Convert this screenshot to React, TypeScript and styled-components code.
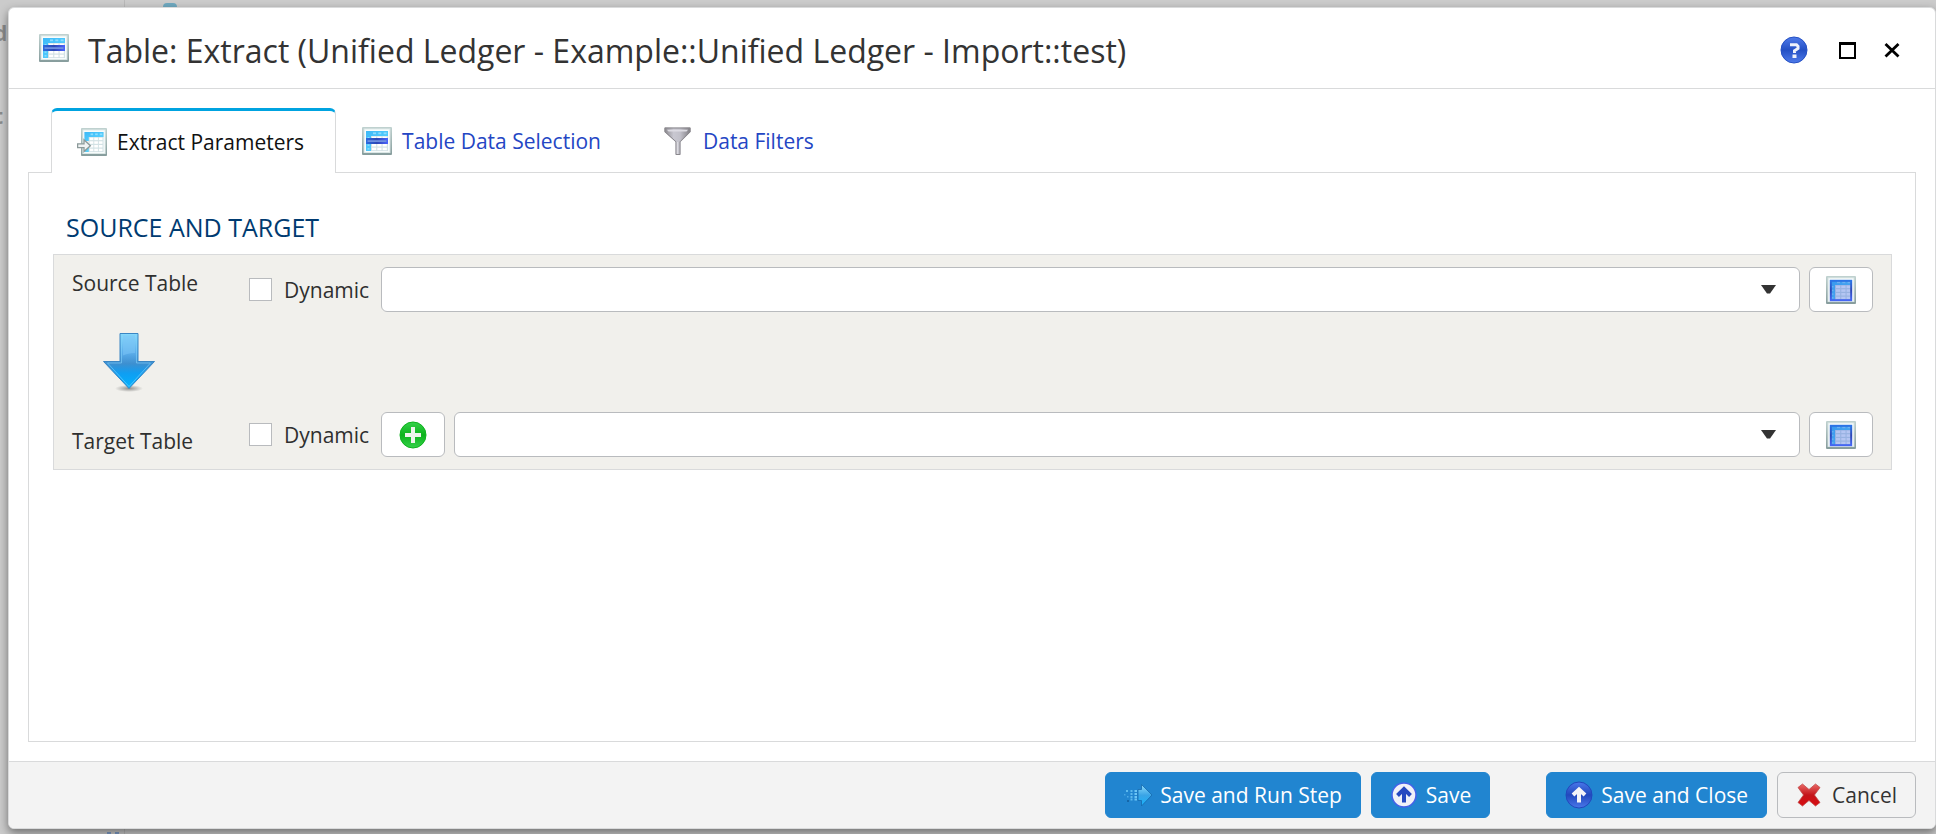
import React from "react";
import styled, { createGlobalStyle, css } from "styled-components";

const GlobalStyle = createGlobalStyle`
  * { box-sizing: border-box; }
  body {
    margin: 0;
    background: #cbcbcb;
    color: #2f2f2f;
    font-family: "Open Sans", "Noto Sans", sans-serif;
    font-size: 21px;
    line-height: 30px;
  }
  button, select, input { font: inherit; color: inherit; margin: 0; }
  svg { display: block; flex: none; }
`;

/* ---------- page behind the dialog ---------- */

const Page = styled.div`
  position: relative;
  overflow: hidden;
  min-height: 100vh;
  padding: 7px 0 5px 8px;
  display: flex;
`;

const Backdrop = styled.div`
  position: absolute;
  inset: 0;
  color: #8b8b8b;
  font-weight: 700;
`;

const BackdropText = styled.span<{ $top: number; $left: number }>`
  position: absolute;
  top: ${(p) => p.$top}px;
  left: ${(p) => p.$left}px;
`;

const BackdropRule = styled.div`
  position: absolute;
  top: 0;
  bottom: 0;
  left: 124px;
  width: 1px;
  background: #b9b9b9;
`;

const BackdropBadge = styled.div`
  position: absolute;
  top: 3px;
  left: 163px;
  width: 14px;
  height: 8px;
  border-radius: 4px;
  background: #6fa9c0;
`;

const BackdropMark = styled.div<{ $left: number }>`
  position: absolute;
  bottom: 0;
  left: ${(p) => p.$left}px;
  width: 4px;
  height: 2px;
  background: #7f9cc6;
`;

/* ---------- dialog ---------- */

const Dialog = styled.section`
  position: relative;
  flex: 1;
  min-width: 0;
  display: flex;
  flex-direction: column;
  background: #fff;
  border: 1px solid #d9dadb;
  border-radius: 6px;
  box-shadow: 0 4px 10px rgba(0, 0, 0, 0.45);
`;

const Header = styled.header`
  display: flex;
  align-items: center;
  height: 81px;
  padding: 0 29px 0 30px;
  border-bottom: 1px solid #d9dadb;
`;

const Title = styled.h1`
  flex: 1;
  margin: 0;
  padding: 6px 0 0 19px;
  font-size: 32px;
  line-height: 44px;
  font-weight: 400;
  white-space: nowrap;
  color: #333;
`;

const WindowActions = styled.div`
  display: flex;
  gap: 16px;
  padding-top: 4px;
`;

const IconButton = styled.button<{ $spaced?: boolean }>`
  display: flex;
  align-items: center;
  justify-content: center;
  width: 28px;
  height: 28px;
  padding: 0;
  border: 0;
  background: none;
  ${(p) => p.$spaced && css`margin-right: 10px;`}
`;

const Body = styled.main`
  flex: 1;
  display: flex;
  flex-direction: column;
  padding: 19px;
`;

const TabList = styled.div`
  display: flex;
  padding-left: 23px;
`;

const Tab = styled.button<{ $active?: boolean }>`
  display: flex;
  align-items: center;
  gap: 10px;
  height: 65px;
  margin-bottom: -1px;
  padding: 0 35px 0 25px;
  border: 1px solid transparent;
  background: none;
  color: #2446c4;
  white-space: nowrap;
  ${(p) =>
    p.$active &&
    css`
      position: relative;
      padding: 0 31px 0 25px;
      border-color: #d9dadb;
      border-top: 3px solid #00a3e0;
      border-bottom: 0;
      border-radius: 6px 6px 0 0;
      background: #fff;
      color: #111;
    `}
`;

const Panel = styled.div`
  flex: 1;
  padding: 37px 23px 24px 24px;
  border: 1px solid #d9dadb;
`;

const SectionTitle = styled.h2`
  margin: 0 0 10px;
  padding-left: 13px;
  font-size: 25px;
  line-height: 34px;
  font-weight: 400;
  color: #003b71;
`;

const FieldBox = styled.div`
  padding: 12px 18px;
  border: 1px solid #d9dadb;
  background: #f1f0ec;
`;

const FieldRow = styled.div`
  display: flex;
  gap: 9px;
  height: 45px;
`;

const FieldLabel = styled.label<{ $align: "start" | "end" }>`
  align-self: flex-${(p) => p.$align};
  width: 168px;
  line-height: 32px;
`;

const CheckLabel = styled.label`
  display: flex;
  align-items: center;
  gap: 12px;
  margin-right: 3px;
`;

const Checkbox = styled.input`
  appearance: none;
  width: 23px;
  height: 23px;
  border: 1px solid #b9bbbe;
  background: #fff;
`;

const SelectWrap = styled.div`
  flex: 1;
  display: grid;
  align-items: center;
  & > * { grid-area: 1 / 1; }
  & > svg {
    justify-self: end;
    margin-right: 24px;
    pointer-events: none;
  }
`;

const Select = styled.select`
  appearance: none;
  width: 100%;
  height: 45px;
  padding: 0 48px 0 12px;
  border: 1px solid #b9bbbe;
  border-radius: 6px;
  background: #fff;
`;

const SquareButton = styled.button`
  display: flex;
  align-items: center;
  justify-content: center;
  width: 64px;
  height: 45px;
  padding: 0;
  border: 1px solid #b9bbbe;
  border-radius: 6px;
  background: #fff;
`;

const ArrowRow = styled.div`
  display: flex;
  align-items: center;
  height: 100px;
  padding-left: 30px;
`;

const Footer = styled.footer`
  display: flex;
  justify-content: flex-end;
  gap: 10px;
  padding: 10px 19px;
  border-top: 1px solid #d9dadb;
  border-radius: 0 0 5px 5px;
  background: #f3f3f3;
`;

const FooterGroup = styled.div`
  display: flex;
  gap: 10px;
  margin-right: 46px;
`;

const ActionButton = styled.button<{ $primary?: boolean }>`
  display: flex;
  align-items: center;
  gap: 8px;
  height: 46px;
  padding: 0 18px;
  border: 1px solid ${(p) => (p.$primary ? "#2185d0" : "#b9bbbe")};
  border-radius: 6px;
  background: ${(p) => (p.$primary ? "#2185d0" : "transparent")};
  color: ${(p) => (p.$primary ? "#fff" : "#333")};
  white-space: nowrap;
`;

/* ---------- icons ---------- */

const TableIcon = ({ mode, id }: { mode: "row" | "all" | "import"; id: string }) => (
  <svg width="30" height="28" viewBox="0 0 30 28" aria-hidden="true">
    <defs>
      <linearGradient id={`${id}-frame`} x1="0" y1="0" x2="0" y2="1">
        <stop offset="0" stopColor="#c0d2d0" />
        <stop offset="1" stopColor="#869c9c" />
      </linearGradient>
      <linearGradient id={`${id}-head`} x1="0" y1="0" x2="1" y2="1">
        <stop offset="0" stopColor="#3db9f8" />
        <stop offset="1" stopColor="#5fd6ff" />
      </linearGradient>
      <linearGradient id={`${id}-sel`} x1="0" y1="0" x2="1" y2="0">
        <stop offset="0" stopColor="#2a6be0" />
        <stop offset="0.5" stopColor="#2d47b4" />
        <stop offset="1" stopColor="#4a63ff" />
      </linearGradient>
      <linearGradient id={`${id}-edge`} x1="0" y1="0" x2="0" y2="1">
        <stop offset="0" stopColor="#2b74e6" />
        <stop offset="0.5" stopColor="#2c46b6" />
        <stop offset="1" stopColor="#4466f4" />
      </linearGradient>
    </defs>
    <g transform={mode === "import" ? "translate(4 0) scale(.867 1)" : undefined}>
      <rect width="30" height="28" rx="1" fill={`url(#${id}-frame)`} />
      <rect x="1.6" y="1.4" width="26.8" height="24.6" fill="#dbe7e6" />
      <rect x="2.6" y="2.4" width="24.8" height="22.6" fill="#f8fcfc" />
      <rect x="4" y="4" width="22" height="20" fill="#d3e2e5" />
      <path d="M4 4h22v5H9v15H4z" fill={mode === "import" ? "#e9f1f1" : `url(#${id}-head)`} />
      {mode === "import" && <path d="M4 4h22v5H9v4H4z" fill={`url(#${id}-head)`} />}
      {mode === "import" && <path d="M4 21l5-3v6H4z" fill="#5acdf5" />}
      <g fill="#fff">
        {[0, 1, 2, 3].map((r) =>
          [0, 1, 2].map((c) => (
            <rect key={`${r}-${c}`} x={10 + c * 5.3} y={9.6 + r * 3.7} width="4.2" height="2.5" />
          )),
        )}
      </g>
      <g fill="#a9e8ff" opacity=".7">
        {[0, 1, 2].map((c) => (
          <rect key={c} x={11 + c * 5.3} y="5.4" width="3" height="1.8" />
        ))}
        {mode !== "import" &&
          [0, 1, 2, 3].map((r) => <rect key={r} x="5.5" y={10 + r * 3.7} width="2" height="1.5" />)}
      </g>
      {mode === "row" && (
        <g>
          <rect x="4" y="11" width="22" height="6" fill={`url(#${id}-sel)`} />
          <rect x="5.5" y="13.2" width="19" height="1.8" fill="#6f8fe0" />
        </g>
      )}
      {mode === "all" && (
        <g>
          <rect x="4" y="4" width="22" height="20" fill="#2f5fda" opacity=".36" />
          <rect
            x="4.8"
            y="4.8"
            width="20.4"
            height="19.4"
            fill="none"
            stroke={`url(#${id}-edge)`}
            strokeWidth="2"
          />
        </g>
      )}
    </g>
    {mode === "import" && (
      <path
        d="M.6 15.800h6.400v-4l6.400 5.900-6.400 5.900v-4H.6z"
        fill="#f0f3f3"
        stroke="#8b9999"
        strokeWidth="1.3"
      />
    )}
  </svg>
);

const FunnelIcon = () => (
  <svg width="30" height="30" viewBox="0 0 30 30" aria-hidden="true">
    <defs>
      <linearGradient id="funnel" x1="0" y1="0" x2="1" y2="0">
        <stop offset="0" stopColor="#89878c" />
        <stop offset=".35" stopColor="#c9c8d1" />
        <stop offset=".6" stopColor="#c2c1ca" />
        <stop offset="1" stopColor="#7e7c81" />
      </linearGradient>
    </defs>
    <path d="M1.500 1.500h26V6L17.500 16v13h-5V16L1.500 6z" fill="url(#funnel)" />
    <path
      d="M2 2h25v3.800L17 15.800V28.500h-4V15.800L2 5.800z"
      fill="none"
      stroke="#8a888d"
      strokeWidth="1"
    />
    <path d="M4 3.800h21l-1.500 1.700H5.500z" fill="#dddce3" />
    <path d="M13.800 16h1.400v12h-1.400z" fill="#dcdbe0" />
  </svg>
);

const Sphere = ({ id, top, bottom }: { id: string; top: string; bottom: string }) => (
  <>
    <defs>
      <linearGradient id={id} x1="0" y1="0" x2="0" y2="1">
        <stop offset="0" stopColor={top} />
        <stop offset=".5" stopColor={bottom} />
        <stop offset="1" stopColor={top} />
      </linearGradient>
    </defs>
    <circle cx="14" cy="14" r="13" fill={`url(#${id})`} stroke={bottom} strokeWidth="1" />
  </>
);

const HelpIcon = () => (
  <svg width="28" height="28" viewBox="0 0 28 28" aria-hidden="true">
    <Sphere id="help" top="#4f7bea" bottom="#2450c4" />
    <path
      d="M10 8.800h6.500l1.500 1.500v2.200l-3.500 2.300v2.200"
      fill="none"
      stroke="#eef2fb"
      strokeWidth="3"
    />
    <rect x="12.500" y="18.500" width="4" height="3.500" fill="#eef2fb" />
  </svg>
);

const MaximizeIcon = () => (
  <svg width="18" height="18" viewBox="0 0 18 18" aria-hidden="true">
    <rect x="0" y="1" width="17" height="17" fill="#000" />
    <rect x="2" y="4" width="13" height="12" fill="#fff" />
  </svg>
);

const CloseIcon = () => (
  <svg width="16" height="16" viewBox="0 0 16 16" aria-hidden="true">
    <path d="M1.500 2l13 12.500M14.500 2l-13 12.500" stroke="#000" strokeWidth="2.800" />
  </svg>
);

const CaretIcon = () => (
  <svg width="15" height="9" viewBox="0 0 15 9" aria-hidden="true">
    <path d="M0 0h15L9 8.500H6z" fill="#333" />
  </svg>
);

const DownArrowIcon = () => (
  <svg width="54" height="60" viewBox="0 0 54 60" aria-hidden="true">
    <defs>
      <linearGradient id="down" x1="0" y1="0" x2="0" y2="1">
        <stop offset="0" stopColor="#8adcfc" />
        <stop offset=".35" stopColor="#5badea" />
        <stop offset=".55" stopColor="#3d8fd0" />
        <stop offset=".72" stopColor="#0f9ef2" />
        <stop offset="1" stopColor="#00b4ff" />
      </linearGradient>
      <radialGradient id="down-shadow">
        <stop offset="0" stopColor="#000" stopOpacity=".4" />
        <stop offset="1" stopColor="#000" stopOpacity="0" />
      </radialGradient>
    </defs>
    <ellipse cx="27" cy="56.500" rx="14" ry="3.500" fill="url(#down-shadow)" />
    <path d="M18 1.500h18V29.500h16.500L27 56.500 1.500 29.500H18z" fill="url(#down)" stroke="#3a86c4" />
    <path d="M19.500 3h15v28h14L27 54.500 5.500 31h14z" fill="none" stroke="#7fd0fa" strokeOpacity=".6" />
    <path d="M21 3.500h12V21c-5 0-9 1-12 2.500z" fill="#7cc4f5" fillOpacity=".55" />
  </svg>
);

const AddIcon = () => (
  <svg width="28" height="28" viewBox="0 0 28 28" aria-hidden="true">
    <Sphere id="add" top="#35d14a" bottom="#0cb31c" />
    <path d="M14 6v16M6 14h16" stroke="#eef4ec" strokeWidth="4" />
  </svg>
);

const RunIcon = () => (
  <svg width="28" height="28" viewBox="0 0 28 28" aria-hidden="true">
    <defs>
      <linearGradient id="run" x1="0" y1="0" x2="0" y2="1">
        <stop offset="0" stopColor="#8fdcfb" />
        <stop offset=".5" stopColor="#3aa4e6" />
        <stop offset="1" stopColor="#16b2fb" />
      </linearGradient>
    </defs>
    <path d="M14 8.500h3.500V3.500L28 14 17.500 25v-5.500H14z" fill="url(#run)" stroke="#1769ad" strokeWidth=".8" />
    <g fill="#6cc5f5">
      {[9.5, 12.500, 15.500, 18].map((y) => (
        <rect key={y} x="10.500" y={y - 0.5} width="2.500" height="2" />
      ))}
      {[9.5, 12.500, 15.500, 18].map((y) => (
        <rect key={y} x="6.500" y={y - 0.5} width="2" height="2" opacity=".8" />
      ))}
      <rect x="2" y="9" width="2" height="2" opacity=".8" />
      <rect x="3" y="15" width="1.500" height="1.500" opacity=".6" />
      <rect x="0" y="13" width="1.500" height="1.500" opacity=".5" />
      <rect x="3" y="19" width="2" height="2" fill="#1566a8" />
    </g>
  </svg>
);

const SaveIcon = () => (
  <svg width="28" height="28" viewBox="0 0 28 28" aria-hidden="true">
    <circle cx="14" cy="14" r="12" fill="#f0f1f8" stroke="#4461e8" strokeWidth="1.500" />
    <path d="M14 8v13.500M7.500 14.500L14 8l6.500 6.500" fill="none" stroke="#2548c0" strokeWidth="4" />
  </svg>
);

const SaveCloseIcon = () => (
  <svg width="28" height="28" viewBox="0 0 28 28" aria-hidden="true">
    <Sphere id="save-close" top="#4a78ea" bottom="#2148bd" />
    <path
      d="M14 8.500v13M8 14l6-5.500 6 5.500"
      fill="none"
      stroke="#f3f4f8"
      strokeWidth="4"
    />
  </svg>
);

const CancelIcon = () => (
  <svg width="28" height="28" viewBox="0 0 28 28" aria-hidden="true">
    <defs>
      <linearGradient id="cancel" x1="0" y1="0" x2="0" y2="1">
        <stop offset="0" stopColor="#ea6a66" />
        <stop offset=".5" stopColor="#c4141a" />
        <stop offset="1" stopColor="#d80c10" />
      </linearGradient>
    </defs>
    <path
      d="M2 6.500L6.500 3l6.500 5.500L19.500 3 24 6.500 18.500 14l5.500 7.500-4.500 3.500-6.500-5.500L6.500 25 2 21.500 7.500 14z"
      fill="url(#cancel)"
      stroke="#c04a4a"
      strokeWidth=".8"
      strokeLinejoin="round"
    />
  </svg>
);

/* ---------- fields ---------- */

const TableField = ({
  name,
  label,
  align,
  canAdd,
}: {
  name: string;
  label: string;
  align: "start" | "end";
  canAdd?: boolean;
}) => (
  <FieldRow>
    <FieldLabel htmlFor={name} $align={align}>
      {label}
    </FieldLabel>
    <CheckLabel>
      <Checkbox type="checkbox" name={`${name}-dynamic`} />
      Dynamic
    </CheckLabel>
    {canAdd && (
      <SquareButton type="button" aria-label="Add table">
        <AddIcon />
      </SquareButton>
    )}
    <SelectWrap>
      <Select id={name} defaultValue="">
        <option value="" />
      </Select>
      <CaretIcon />
    </SelectWrap>
    <SquareButton type="button" aria-label={`Browse ${label}`}>
      <TableIcon mode="all" id={`${name}-browse`} />
    </SquareButton>
  </FieldRow>
);

export default function App() {
  return (
    <Page>
      <GlobalStyle />
      <Backdrop aria-hidden="true">
        <BackdropText $top={18} $left={-6}>d</BackdropText>
        <BackdropText $top={101} $left={-6}>t</BackdropText>
        <BackdropRule />
        <BackdropBadge />
        <BackdropMark $left={107} />
        <BackdropMark $left={115} />
      </Backdrop>
      <Dialog role="dialog" aria-labelledby="dialog-title">
        <Header>
          <TableIcon mode="row" id="title" />
          <Title id="dialog-title">
            Table: Extract (Unified Ledger - Example::Unified Ledger - Import::test)
          </Title>
          <WindowActions>
            <IconButton type="button" aria-label="Help" $spaced>
              <HelpIcon />
            </IconButton>
            <IconButton type="button" aria-label="Maximize">
              <MaximizeIcon />
            </IconButton>
            <IconButton type="button" aria-label="Close">
              <CloseIcon />
            </IconButton>
          </WindowActions>
        </Header>
        <Body>
          <TabList role="tablist">
            <Tab type="button" role="tab" aria-selected="true" $active>
              <TableIcon mode="import" id="tab-extract" />
              Extract Parameters
            </Tab>
            <Tab type="button" role="tab" aria-selected="false">
              <TableIcon mode="row" id="tab-selection" />
              Table Data Selection
            </Tab>
            <Tab type="button" role="tab" aria-selected="false">
              <FunnelIcon />
              Data Filters
            </Tab>
          </TabList>
          <Panel role="tabpanel">
            <SectionTitle>SOURCE AND TARGET</SectionTitle>
            <FieldBox>
              <TableField name="source" label="Source Table" align="start" />
              <ArrowRow>
                <DownArrowIcon />
              </ArrowRow>
              <TableField name="target" label="Target Table" align="end" canAdd />
            </FieldBox>
          </Panel>
        </Body>
        <Footer>
          <FooterGroup>
            <ActionButton type="button" $primary>
              <RunIcon />
              Save and Run Step
            </ActionButton>
            <ActionButton type="button" $primary>
              <SaveIcon />
              Save
            </ActionButton>
          </FooterGroup>
          <ActionButton type="button" $primary>
            <SaveCloseIcon />
            Save and Close
          </ActionButton>
          <ActionButton type="button">
            <CancelIcon />
            Cancel
          </ActionButton>
        </Footer>
      </Dialog>
    </Page>
  );
}
